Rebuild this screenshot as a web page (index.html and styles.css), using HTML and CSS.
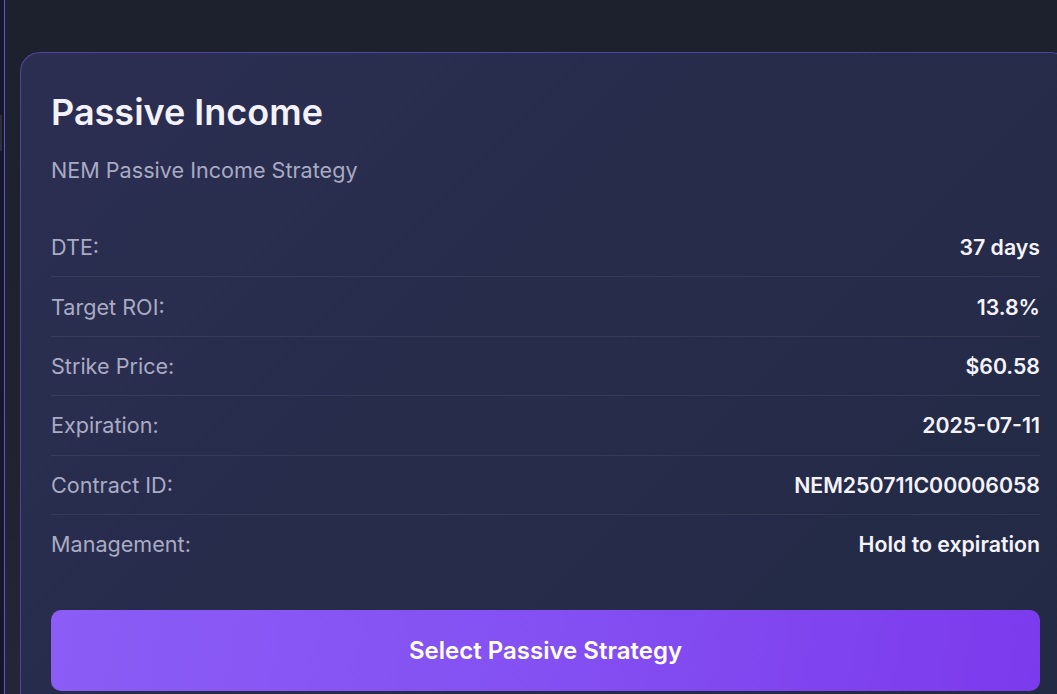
FILE: index.html
```html
<!DOCTYPE html>
<html lang="en">
<head>
<meta charset="utf-8">
<title>Passive Income</title>
<link rel="stylesheet" href="styles.css">
</head>
<body>
  <div class="rail"><span class="rail-tab"></span></div>
  <main class="main">
    <section class="card">
      <h1 class="card-title">Passive Income</h1>
      <p class="card-subtitle">NEM Passive Income Strategy</p>
      <dl class="details">
        <div class="row"><dt>DTE:</dt><dd>37 days</dd></div>
        <div class="row"><dt>Target ROI:</dt><dd>13.8%</dd></div>
        <div class="row"><dt>Strike Price:</dt><dd>$60.58</dd></div>
        <div class="row"><dt>Expiration:</dt><dd>2025-07-11</dd></div>
        <div class="row"><dt>Contract ID:</dt><dd>NEM250711C00006058</dd></div>
        <div class="row"><dt>Management:</dt><dd>Hold to expiration</dd></div>
      </dl>
      <button class="select-btn" type="button">Select Passive Strategy</button>
    </section>
  </main>
</body>
</html>
```

FILE: styles.css
```css
* { box-sizing: border-box; }

html, body {
  margin: 0;
  height: 100%;
}

body {
  display: flex;
  overflow: hidden;
  background: #1d202d;
  font-family: Inter, "Noto Sans", "Liberation Sans", sans-serif;
  color: #f2f1fa;
}

.rail {
  position: relative;
  flex: 0 0 5px;
  background: #15172a;
  border-right: 1px solid #6a4fd6;
}

.rail-tab {
  position: absolute;
  left: 0;
  top: 115px;
  width: 2px;
  height: 36px;
  background: #2c2e40;
}

.main {
  flex: 1;
  display: flex;
  align-items: flex-start;
  padding: 52px 0 0 15px;
  background: linear-gradient(180deg, #1d202d 0%, #20222f 60%, #242537 100%);
  min-width: 0;
}

.card {
  flex: 0 0 1051px;
  border: 1px solid rgba(118, 88, 232, 0.55);
  border-radius: 20px;
  padding: 39px 30px 30px;
  background: linear-gradient(135deg, #2b2e51 0%, #272c4b 45%, #222a44 100%);
}

.card-title {
  margin: 0;
  font-size: 36px;
  line-height: 40px;
  font-weight: 600;
  color: #f3f1fb;
}

.card-subtitle {
  margin: 23px 0 0;
  font-size: 21.6px;
  line-height: 30px;
  color: #a8aac3;
}

.details {
  margin: 33px 0 0;
}

.row {
  display: flex;
  justify-content: space-between;
  align-items: center;
  padding: 17.2px 0;
  border-bottom: 1px solid rgba(255, 255, 255, 0.07);
  font-size: 21.6px;
  line-height: 24px;
}

.row:last-child {
  border-bottom: none;
}

.row dt {
  color: #a9abc4;
}

.row dd {
  margin: 0;
  font-size: 21.3px;
  font-weight: 600;
  color: #f4f3fb;
}

.select-btn {
  display: block;
  width: 100%;
  height: 81px;
  margin-top: 37px;
  border: none;
  border-radius: 10px;
  background: linear-gradient(100deg, #8b5cf6 0%, #8450f2 50%, #7c3aed 100%);
  color: #ffffff;
  font-family: inherit;
  font-size: 24px;
  font-weight: 600;
  cursor: pointer;
}
```
